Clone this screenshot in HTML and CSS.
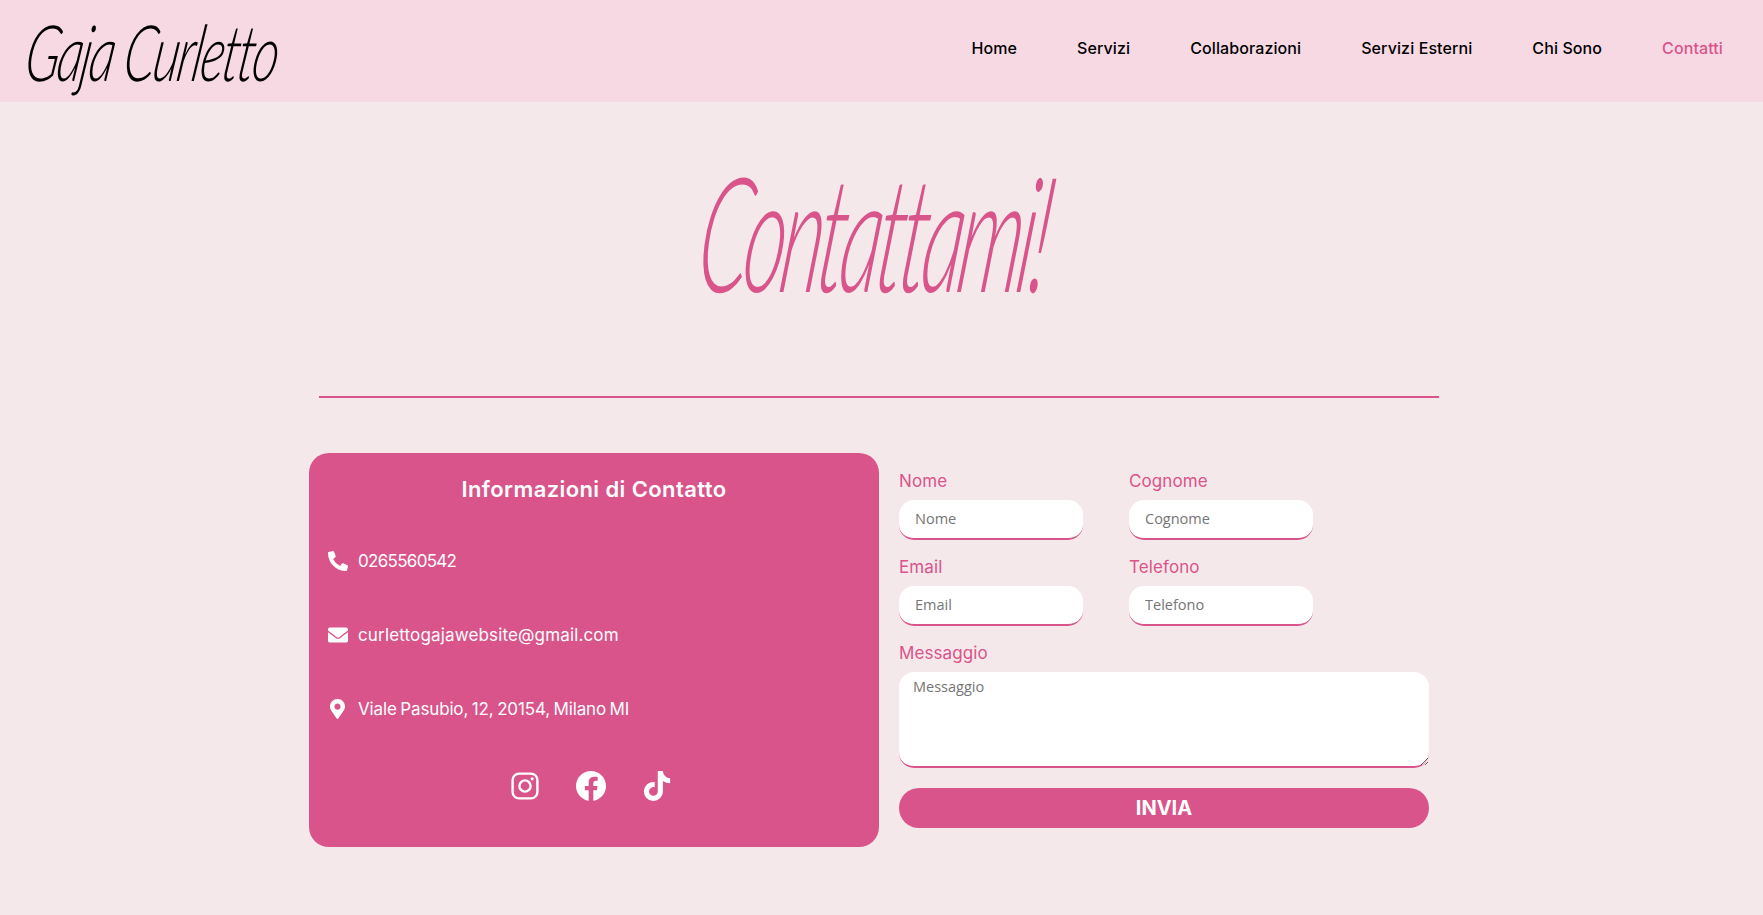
FILE: index.html
```html
<!DOCTYPE html>
<html lang="it">
<head>
    <meta charset="UTF-8">
    <title>Contatti</title>
    <link rel="stylesheet" href="styles.css">
</head>
<body>
    <header class="topbar">
        <a class="logo" href="#">Gaja Curletto</a>
        <nav class="nav">
            <a href="#">Home</a>
            <a href="#">Servizi</a>
            <a href="#">Collaborazioni</a>
            <a href="#">Servizi Esterni</a>
            <a href="#">Chi Sono</a>
            <a class="current" href="#">Contatti</a>
        </nav>
    </header>

    <main class="page">
        <h1 class="title"><span class="title-text">Contattami!</span></h1>
        <hr class="divider">

        <section class="contact">
            <div class="card">
                <h2 class="card-title">Informazioni di Contatto</h2>
                <div class="info-row">
                    <span class="info-icon">
                        <svg width="20" height="20" viewBox="0 0 512 512"><path d="M497.39 361.8l-112-48a24 24 0 0 0-28 6.9l-49.6 60.6A370.66 370.66 0 0 1 130.6 204.11l60.6-49.6a23.94 23.94 0 0 0 6.9-28l-48-112A24.16 24.16 0 0 0 122.6.61l-104 24A24 24 0 0 0 0 48c0 256.5 207.9 464 464 464a24 24 0 0 0 23.4-18.6l24-104a24.29 24.29 0 0 0-14.01-27.6z"/></svg>
                    </span>
                    <span class="phone">0265560542</span>
                </div>
                <div class="info-row">
                    <span class="info-icon">
                        <svg width="20" height="20" viewBox="0 0 512 512"><path d="M502.3 190.8c3.9-3.1 9.7-.2 9.7 4.7V400c0 26.5-21.5 48-48 48H48c-26.5 0-48-21.5-48-48V195.6c0-5 5.7-7.8 9.7-4.7 22.4 17.4 52.1 39.5 154.1 113.6 21.1 15.4 56.7 47.8 92.2 47.6 35.7.3 72-32.8 92.3-47.6 102-74.1 131.6-96.3 154-113.7zM256 320c23.2.4 56.6-29.2 73.4-41.4 132.7-96.3 142.8-104.7 173.4-128.7 5.8-4.5 9.2-11.5 9.2-18.9v-19c0-26.5-21.5-48-48-48H48C21.5 64 0 85.5 0 112v19c0 7.4 3.4 14.3 9.2 18.9 30.6 23.9 40.7 32.4 173.4 128.7 16.8 12.2 50.2 41.8 73.4 41.4z"/></svg>
                    </span>
                    <span>curlettogajawebsite@gmail.com</span>
                </div>
                <div class="info-row">
                    <span class="info-icon">
                        <svg width="15" height="20" viewBox="0 0 384 512"><path d="M172.268 501.67C26.97 291.031 0 255.82 0 192 0 85.961 85.961 0 192 0s192 85.961 192 192c0 63.82-26.97 99.031-172.268 309.67-9.535 13.774-29.93 13.773-39.464 0zM192 272c44.183 0 80-35.817 80-80s-35.817-80-80-80-80 35.817-80 80 35.817 80 80 80z"/></svg>
                    </span>
                    <span class="address">Viale Pasubio, 12, 20154, Milano MI</span>
                </div>
                <div class="socials">
                    <a href="#">
                        <svg class="outline" width="30" height="30" viewBox="0 0 30 30"><rect x="2.6" y="2.6" width="24.8" height="24.8" rx="6.5"/><circle cx="15" cy="15" r="5.6"/><circle class="dot" cx="22.2" cy="7.8" r="1.6"/></svg>
                    </a>
                    <a href="#">
                        <svg width="30" height="30" viewBox="8 8 496 496"><path d="M504 256C504 119 393 8 256 8S8 119 8 256c0 123.78 90.69 226.38 209.25 245V327.69h-63V256h63v-54.64c0-62.15 37-96.48 93.67-96.48 27.14 0 55.52 4.84 55.52 4.84v61h-31.28c-30.8 0-40.41 19.12-40.41 38.73V256h68.78l-11 71.69h-57.78V501C413.31 482.38 504 379.78 504 256z"/></svg>
                    </a>
                    <a href="#">
                        <svg width="30" height="30" viewBox="0 0 448 512"><path d="M448,209.91a210.06,210.06,0,0,1-122.77-39.25V349.38A162.55,162.55,0,1,1,185,188.31V278.2a74.62,74.62,0,1,0,52.23,71.18V0l88,0a121.18,121.18,0,0,0,1.86,22.17h0A122.18,122.18,0,0,0,381,102.39a121.43,121.43,0,0,0,67,20.14Z"/></svg>
                    </a>
                </div>
            </div>

            <form class="form">
                <div class="form-row">
                    <div class="field">
                        <label for="nome">Nome</label>
                        <input type="text" id="nome" placeholder="Nome">
                    </div>
                    <div class="field">
                        <label for="cognome">Cognome</label>
                        <input type="text" id="cognome" placeholder="Cognome">
                    </div>
                </div>
                <div class="form-row">
                    <div class="field">
                        <label for="email">Email</label>
                        <input type="text" id="email" placeholder="Email">
                    </div>
                    <div class="field">
                        <label for="telefono">Telefono</label>
                        <input type="text" id="telefono" placeholder="Telefono">
                    </div>
                </div>
                <label for="messaggio">Messaggio</label>
                <textarea id="messaggio" placeholder="Messaggio"></textarea>
                <button type="button" class="send">INVIA</button>
            </form>
        </section>
    </main>
</body>
</html>
```

FILE: styles.css
```css
* {
    box-sizing: border-box;
    margin: 0;
    padding: 0;
}

body {
    background-color: #f5e8eb;
    color: #000;
    font-family: 'Inter', sans-serif;
    overflow: hidden;
}

a {
    color: inherit;
    text-decoration: none;
}

/* header */
.topbar {
    display: flex;
    justify-content: space-between;
    align-items: center;
    height: 102px;
    padding: 0 40px 0 27px;
    background-color: #f7d9e4;
}

/* no script font here, so both signatures are a light italic squeezed sideways */
.logo {
    display: block;
    width: 252px;
    font-family: 'Lato', sans-serif;
    font-style: italic;
    font-weight: 300;
    font-size: 78px;
    letter-spacing: -3px;
    line-height: 1;
    white-space: nowrap;
    transform: scaleX(0.65) skewX(-14deg);
    transform-origin: left center;
}

.nav {
    display: flex;
    gap: 60px;
    margin-top: -7px;
    font-size: 16px;
    font-weight: 500;
    letter-spacing: 0.1px;
}

.nav .current {
    color: #d9548a;
}

/* title */
.page {
    width: 1120px;
    margin-left: 319px;
}

.title {
    display: flex;
    justify-content: center;
    align-items: center;
    height: 294px;
    padding-bottom: 38px;
    margin-left: -8px;
    color: #d9548a;
    font-weight: 400;
}

.title-text {
    font-family: 'Lato', sans-serif;
    font-style: italic;
    font-weight: 300;
    font-size: 160px;
    letter-spacing: -9px;
    line-height: 1;
    white-space: nowrap;
    transform: scaleX(0.51) skewX(-15deg);
}

.divider {
    height: 2px;
    border: none;
    background-color: #d9548a;
}

/* contact block */
.contact {
    display: flex;
    gap: 20px;
    margin: 55px 0 0 -10px;
}

.card {
    width: 570px;
    height: 394px;
    padding: 22px 18px 0;
    border-radius: 20px;
    background-color: #d9548a;
    color: #fff;
}

.card-title {
    margin-bottom: 46px;
    font-size: 22px;
    font-weight: 600;
    letter-spacing: 0.4px;
    line-height: 28px;
    text-align: center;
}

.info-row {
    display: flex;
    align-items: center;
    height: 24px;
    margin-bottom: 50px;
    font-size: 17px;
    letter-spacing: 0.15px;
}

.info-row .phone {
    letter-spacing: -0.7px;
}

.info-row .address {
    letter-spacing: -0.15px;
    word-spacing: -1px;
}

.info-icon {
    display: flex;
    justify-content: center;
    width: 21px;
    margin-right: 10px;
}

.info-icon svg,
.socials svg {
    display: block;
    fill: #fff;
}

.socials {
    display: flex;
    justify-content: center;
    gap: 36px;
    margin: 1px 7px 0 0;
}

.socials .outline {
    fill: none;
    stroke: #fff;
    stroke-width: 2.4;
}

.socials .outline .dot {
    fill: #fff;
    stroke: none;
}

/* form */
.form {
    width: 530px;
    padding-top: 18px;
}

.form-row {
    display: flex;
    gap: 46px;
    margin-bottom: 17px;
}

.field {
    width: 184px;
}

label {
    display: block;
    height: 20px;
    margin-bottom: 9px;
    color: #d9548a;
    font-size: 17px;
    letter-spacing: 0.1px;
    line-height: 21px;
}

input,
textarea {
    display: block;
    width: 100%;
    border: none;
    border-bottom: 2px solid #d9548a;
    border-radius: 15px;
    background-color: #fff;
    color: #333;
    font-family: 'Open Sans', sans-serif;
    font-size: 14.5px;
    outline: none;
}

input {
    height: 40px;
    padding: 0 16px 2px;
}

textarea {
    height: 96px;
    padding: 5px 14px;
}

.send {
    display: block;
    width: 100%;
    height: 40px;
    margin-top: 20px;
    border: none;
    border-radius: 20px;
    background-color: #d9548a;
    color: #fff;
    font-family: 'Inter', sans-serif;
    font-size: 20px;
    font-weight: 700;
    cursor: pointer;
}
```
